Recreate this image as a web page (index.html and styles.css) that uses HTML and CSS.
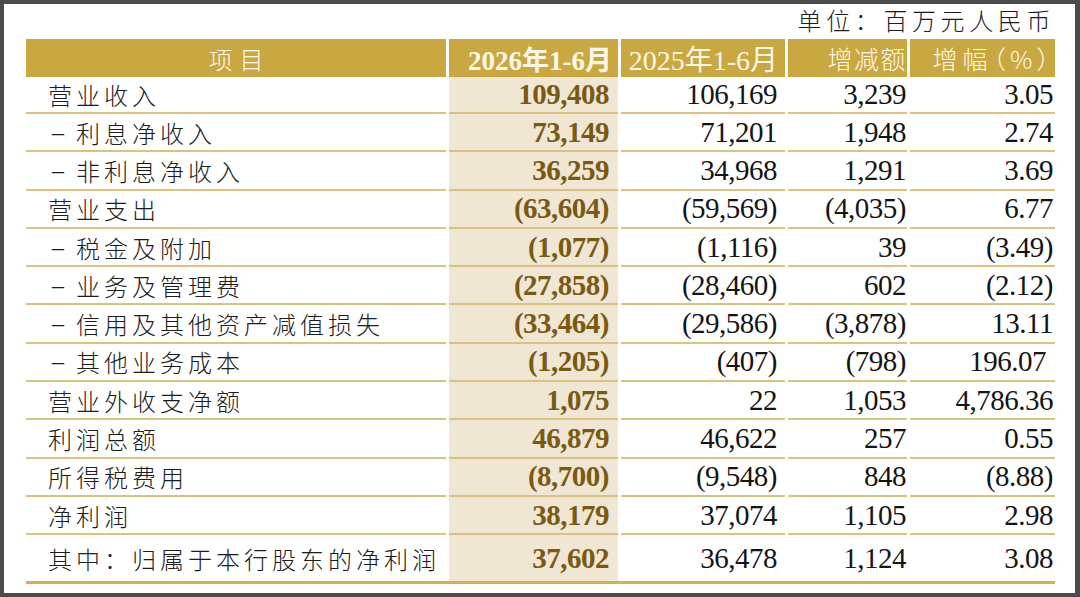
FILE: index.html
```html
<!DOCTYPE html>
<html lang="zh-CN">
<head>
<meta charset="utf-8">
<title>利润表摘要</title>
<link rel="stylesheet" href="styles.css">
</head>
<body>
<div class="frame">
  <div class="sheet">
    <div class="unit">单位：百万元人民币</div>
    <div class="table">
      <div class="th c1 th-item">项目</div>
      <div class="th c2 th-cur">2026年1-6月</div>
      <div class="th c3 th-prev">2025年1-6月</div>
      <div class="th c4 th-cn">增减额</div>
      <div class="th c5 th-cn th-pct">增幅（%）</div>

      <div class="td c1">营业收入</div>
      <div class="td c2">109,408</div>
      <div class="td c3">106,169</div>
      <div class="td c4">3,239</div>
      <div class="td c5">3.05</div>

      <div class="td c1"><span class="dash">–</span>利息净收入</div>
      <div class="td c2">73,149</div>
      <div class="td c3">71,201</div>
      <div class="td c4">1,948</div>
      <div class="td c5">2.74</div>

      <div class="td c1"><span class="dash">–</span>非利息净收入</div>
      <div class="td c2">36,259</div>
      <div class="td c3">34,968</div>
      <div class="td c4">1,291</div>
      <div class="td c5">3.69</div>

      <div class="td c1">营业支出</div>
      <div class="td c2">(63,604)</div>
      <div class="td c3">(59,569)</div>
      <div class="td c4">(4,035)</div>
      <div class="td c5">6.77</div>

      <div class="td c1"><span class="dash">–</span>税金及附加</div>
      <div class="td c2">(1,077)</div>
      <div class="td c3">(1,116)</div>
      <div class="td c4">39</div>
      <div class="td c5">(3.49)</div>

      <div class="td c1"><span class="dash">–</span>业务及管理费</div>
      <div class="td c2">(27,858)</div>
      <div class="td c3">(28,460)</div>
      <div class="td c4">602</div>
      <div class="td c5">(2.12)</div>

      <div class="td c1"><span class="dash">–</span>信用及其他资产减值损失</div>
      <div class="td c2">(33,464)</div>
      <div class="td c3">(29,586)</div>
      <div class="td c4">(3,878)</div>
      <div class="td c5">13.11</div>

      <div class="td c1"><span class="dash">–</span>其他业务成本</div>
      <div class="td c2">(1,205)</div>
      <div class="td c3">(407)</div>
      <div class="td c4">(798)</div>
      <div class="td c5 nudge">196.07</div>

      <div class="td c1">营业外收支净额</div>
      <div class="td c2">1,075</div>
      <div class="td c3">22</div>
      <div class="td c4">1,053</div>
      <div class="td c5">4,786.36</div>

      <div class="td c1">利润总额</div>
      <div class="td c2">46,879</div>
      <div class="td c3">46,622</div>
      <div class="td c4">257</div>
      <div class="td c5">0.55</div>

      <div class="td c1">所得税费用</div>
      <div class="td c2">(8,700)</div>
      <div class="td c3">(9,548)</div>
      <div class="td c4">848</div>
      <div class="td c5">(8.88)</div>

      <div class="td c1">净利润</div>
      <div class="td c2">38,179</div>
      <div class="td c3">37,074</div>
      <div class="td c4">1,105</div>
      <div class="td c5">2.98</div>

      <div class="td c1 last">其中：归属于本行股东的净利润</div>
      <div class="td c2 last">37,602</div>
      <div class="td c3 last">36,478</div>
      <div class="td c4 last">1,124</div>
      <div class="td c5 last">3.08</div>
    </div>
  </div>
</div>
</body>
</html>
```

FILE: styles.css
```css
* {
  box-sizing: border-box;
}

html,
body {
  margin: 0;
  padding: 0;
  background: #4b4b4b;
}

.frame {
  width: 1080px;
  height: 597px;
  border-style: solid;
  border-color: #4b4b4b;
  border-width: 4px 5px 4px 4px;
  background: #ffffff;
  overflow: hidden;
}

.sheet {
  padding-left: 22px;
}

.unit {
  width: 1029px;
  height: 35px;
  line-height: 32px;
  text-align: right;
  font-family: "Noto Sans CJK SC", sans-serif;
  font-weight: 300;
  font-size: 24px;
  letter-spacing: 4.6px;
  color: #1c1c1c;
}

.table {
  width: 1029px;
  display: grid;
  grid-template-columns: 420px 169px 164px 119px 145px;
  grid-template-rows: 38px 37px repeat(11, 38.3px) 46px;
  column-gap: 3px;
  border-bottom: 3px solid #d3b14f;
}

.th {
  background: #c9a741;
  color: #fff8e8;
  display: flex;
  align-items: center;
  justify-content: flex-end;
  white-space: nowrap;
  font-family: "Liberation Serif", "Noto Sans CJK SC", serif;
  font-size: 27px;
}

.th-item {
  justify-content: center;
  font-family: "Noto Sans CJK SC", sans-serif;
  font-weight: 300;
  font-size: 24px;
  letter-spacing: 7px;
  padding-left: 7px;
}

.th-cur {
  font-weight: bold;
  padding-right: 6px;
}

.th-prev {
  padding-right: 7px;
  font-size: 28px;
}

.th-cn {
  font-family: "Noto Sans CJK SC", sans-serif;
  font-weight: 300;
  font-size: 25px;
  letter-spacing: 1.5px;
  padding-right: 0;
}

.th-pct {
  font-feature-settings: "palt" 1;
  letter-spacing: 5px;
}

.td {
  display: flex;
  align-items: center;
  justify-content: flex-end;
  white-space: nowrap;
  border-bottom: 2px solid #dcc27d;
  font-family: "Liberation Serif", serif;
  font-size: 29px;
  letter-spacing: -0.5px;
  color: #141414;
}

.td.last {
  border-bottom: none;
}

.td.c1 {
  justify-content: flex-start;
  padding-left: 22px;
  font-family: "Noto Sans CJK SC", sans-serif;
  font-weight: 300;
  font-size: 24px;
  letter-spacing: 4px;
  color: #1c1c1c;
}

.dash {
  display: inline-block;
  width: 28px;
  padding-left: 4px;
  text-align: left;
  font-family: "Liberation Serif", serif;
  letter-spacing: 0;
  vertical-align: 2px;
}

.td.c2 {
  background: #efe6d4;
  color: #7a5a12;
  font-weight: bold;
  padding-right: 9px;
}

.td.c3 {
  padding-right: 8px;
}

.td.c4 {
  padding-right: 1px;
}

.td.c5 {
  padding-right: 2px;
}

.td.c5.nudge {
  padding-right: 9px;
}
```
